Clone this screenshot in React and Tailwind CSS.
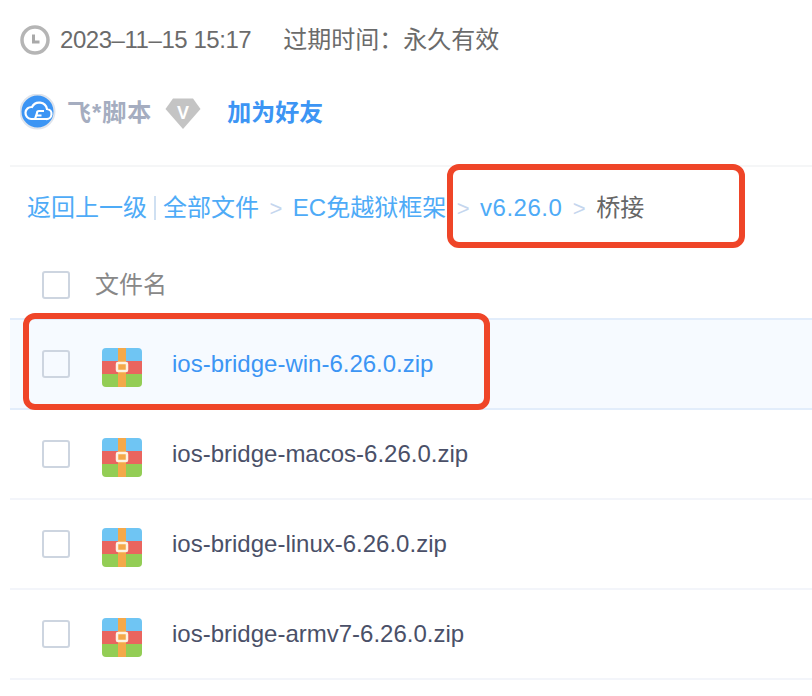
import React from 'react';

const files = [
    'ios-bridge-win-6.26.0.zip',
    'ios-bridge-macos-6.26.0.zip',
    'ios-bridge-linux-6.26.0.zip',
    'ios-bridge-armv7-6.26.0.zip',
];

const font = "font-['Liberation_Sans','Noto_Sans_CJK_SC',sans-serif]";

const ZipIcon = () => (
    <svg width="40" height="39" viewBox="0 0 40 39" className="shrink-0">
        <defs>
            <clipPath id="zip-clip">
                <rect x="0" y="0" width="40" height="39" rx="4" />
            </clipPath>
        </defs>
        <g clipPath="url(#zip-clip)">
            <rect x="0" y="0" width="40" height="13" fill="#6fc5f3" />
            <rect x="0" y="13" width="40" height="13" fill="#e9655f" />
            <rect x="0" y="26" width="40" height="13" fill="#93cd55" />
            <rect x="16" y="0" width="8" height="39" fill="#f4a94a" />
        </g>
        <rect x="15" y="15" width="10" height="8" rx="1" fill="#f4a94a" stroke="#fdf3e3" strokeWidth="2.5" />
    </svg>
);

const Checkbox = ({ bg = 'bg-white' }) => (
    <div className={`w-[28px] h-[28px] rounded-[3px] border-2 border-[#cdd5e0] shrink-0 ${bg}`}></div>
);

const Sep = () => <span className="mx-[10.5px] text-[22px] text-[#c5d6ee]">&gt;</span>;

const App = () => {
    return (
        <div className={`relative w-[812px] h-[696px] overflow-hidden bg-white ${font}`}>
            {/* Meta */}
            <div className="h-[167px] ml-[10px] border-b-2 border-[#f5f6f7]">
                <div className="flex items-center h-[80px] pl-[10px] text-[24px] text-[#6b6b6b]">
                    <svg width="30" height="30" viewBox="0 0 30 30" className="shrink-0">
                        <circle cx="15" cy="15" r="13" fill="#fff" stroke="#b5b5b5" strokeWidth="3.5" />
                        <path d="M13.5 9.5 V17 H19.5" fill="none" stroke="#a9a9a9" strokeWidth="3" />
                    </svg>
                    <span className="ml-[10px] tracking-[-0.45px]">2023–11–15 15:17</span>
                    <span className="ml-[32px]">过期时间：永久有效</span>
                </div>
                <div className="flex items-center h-[66px] pl-[10px]">
                    <svg width="36" height="36" viewBox="0 0 36 36" className="shrink-0 mb-[2px]">
                        <circle cx="17.5" cy="17.5" r="17" fill="#3c95f4" stroke="#dfe4ec" strokeWidth="2" />
                        <path d="M11 25 H26 a5 5 0 0 0 1 -10 a8 8 0 0 0 -15 -2 a6 6 0 0 0 -1 12 Z" fill="none" stroke="#fff" strokeWidth="2.2" />
                        <path d="M15 25 L17 19 a2 2 0 0 1 2 -2 H24 M15.5 21.5 H21.5" fill="none" stroke="#fff" strokeWidth="2.2" />
                    </svg>
                    <span className="ml-[11px] text-[24px] font-bold text-[#a5adc0] tracking-[1px]">飞*脚本</span>
                    <svg width="36" height="31" viewBox="0 0 36 31" className="ml-[13px] shrink-0">
                        <path d="M8 0.5 H28 L35.5 11 L18 31 L0.5 11 Z" fill="#c4c4c4" />
                        <text x="18" y="21" textAnchor="middle" fontSize="18" fontWeight="700" fill="#fff">V</text>
                    </svg>
                    <span className="ml-[26px] text-[24px] font-bold text-[#3c95f4]">加为好友</span>
                </div>
            </div>

            {/* Breadcrumb */}
            <div className="flex items-center h-[80px] pt-[2px] pl-[27px] text-[24px] text-[#4eabf7] whitespace-nowrap">
                <span>返回上一级</span>
                <span className="w-[2px] h-[24px] bg-[#cfe0f2] mx-[7px]"></span>
                <span>全部文件</span>
                <Sep />
                <span>EC免越狱框架</span>
                <Sep />
                <span className="tracking-[0.5px]">v6.26.0</span>
                <Sep />
                <span className="text-[#666666]">桥接</span>
            </div>

            {/* Header */}
            <div className="flex items-center h-[73px] pt-[5px] ml-[10px] pl-[32px] border-b-2 border-[#e2edfb]">
                <Checkbox />
                <span className="ml-[25px] text-[24px] text-[#888888]">文件名</span>
            </div>

            {/* File rows */}
            {files.map((name, i) => (
                <div
                    key={name}
                    className={`flex items-center h-[90px] ml-[10px] pl-[32px] border-b-2 ${i === 0 ? 'bg-[#f6faff] border-[#e2edfb]' : 'border-[#f3f5fa]'}`}
                >
                    <Checkbox bg={i === 0 ? 'bg-[#f6faff]' : 'bg-white'} />
                    <div className="ml-[32px] mt-[6px]"><ZipIcon /></div>
                    <span className={`ml-[30px] text-[24px] ${i === 0 ? 'text-[#3c95f4]' : 'text-[#4a5068]'}`}>{name}</span>
                </div>
            ))}

            {/* Annotations */}
            <div className="absolute left-[447px] top-[164px] w-[298px] h-[84px] rounded-[12px] border-[6px] border-[#ef4528]"></div>
            <div className="absolute left-[23px] top-[313px] w-[467px] h-[97px] rounded-[12px] border-[6px] border-[#ef4528]"></div>
        </div>
    );
};

export default App;
